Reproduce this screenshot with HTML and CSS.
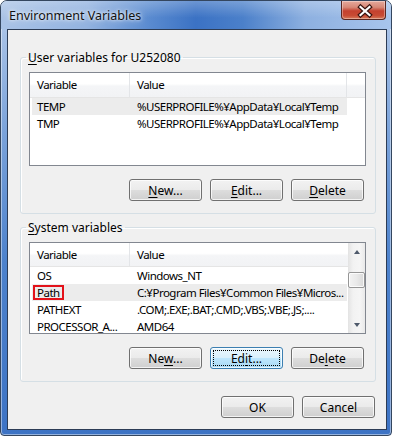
FILE: index.html
```html
<!DOCTYPE html>
<html lang="en">

<head>
    <meta charset="UTF-8">
    <title>Environment Variables</title>
    <link rel="stylesheet" href="styles.css">
</head>

<body>
    <div class="window">
        <div class="titlebar">
            <span class="title">Environment Variables</span>
            <div class="close-btn">
                <svg width="45" height="19" viewBox="0 0 45 19">
                    <path d="M19.5 6 L28.5 14 M28.5 6 L19.5 14" stroke="#3a1410" stroke-width="4.5" stroke-linecap="square" fill="none" />
                    <path d="M19.5 6 L28.5 14 M28.5 6 L19.5 14" stroke="#ffffff" stroke-width="2.2" stroke-linecap="square" fill="none" />
                </svg>
            </div>
        </div>

        <div class="client">
            <fieldset class="group">
                <legend><u>U</u>ser variables for U252080</legend>
                <div class="listview user-list">
                    <div class="lv-main">
                        <div class="lv-header">
                            <div class="hcol col-name">Variable</div>
                            <div class="hcol col-value">Value</div>
                            <div class="hcol col-rest"></div>
                        </div>
                        <div class="lv-row selected">
                            <div class="cell col-name">TEMP</div>
                            <div class="cell col-value">%USERPROFILE%¥AppData¥Local¥Temp</div>
                        </div>
                        <div class="lv-row">
                            <div class="cell col-name">TMP</div>
                            <div class="cell col-value">%USERPROFILE%¥AppData¥Local¥Temp</div>
                        </div>
                    </div>
                </div>
                <div class="btn-row">
                    <button class="btn"><u>N</u>ew...</button>
                    <button class="btn"><u>E</u>dit...</button>
                    <button class="btn"><u>D</u>elete</button>
                </div>
            </fieldset>

            <fieldset class="group system-group">
                <legend><u>S</u>ystem variables</legend>
                <div class="listview system-list">
                    <div class="lv-main">
                        <div class="lv-header">
                            <div class="hcol col-name">Variable</div>
                            <div class="hcol col-value">Value</div>
                        </div>
                        <div class="lv-row">
                            <div class="cell col-name">OS</div>
                            <div class="cell col-value">Windows_NT</div>
                        </div>
                        <div class="lv-row selected">
                            <div class="cell col-name marked-cell"><span class="marked">Path</span></div>
                            <div class="cell col-value">C:¥Program Files¥Common Files¥Micros...</div>
                        </div>
                        <div class="lv-row">
                            <div class="cell col-name">PATHEXT</div>
                            <div class="cell col-value">.COM;.EXE;.BAT;.CMD;.VBS;.VBE;.JS;....</div>
                        </div>
                        <div class="lv-row">
                            <div class="cell col-name">PROCESSOR_A...</div>
                            <div class="cell col-value">AMD64</div>
                        </div>
                    </div>
                    <div class="scrollbar">
                        <div class="sb-arrow"><span class="tri-up"></span></div>
                        <div class="sb-track"><div class="sb-thumb"></div></div>
                        <div class="sb-arrow"><span class="tri-down"></span></div>
                    </div>
                </div>
                <div class="btn-row">
                    <button class="btn">Ne<u>w</u>...</button>
                    <button class="btn focused"><span class="focus-rect">Ed<u>i</u>t...</span></button>
                    <button class="btn">De<u>l</u>ete</button>
                </div>
            </fieldset>

            <div class="dialog-buttons">
                <button class="btn">OK</button>
                <button class="btn">Cancel</button>
            </div>
        </div>
    </div>
</body>

</html>
```

FILE: styles.css
```css
body{
    margin: 0;
    background-color: #ffffff;
    font-family: "Noto Sans", "DejaVu Sans", sans-serif;
    font-size: 12px;
    color: #000000;
}

.window{
    width: 392px;
    height: 436px;
    box-sizing: border-box;
    border: 1px solid #34465f;
    border-radius: 7px 7px 4px 4px;
    padding: 0 4px 5px 6px;
    display: flex;
    flex-direction: column;
    background: linear-gradient(180deg, #bcd1ec 0%, #a5c0e6 8%, #7ba3da 30%, #4d82cc 60%, #3d73c4 100%);
    box-shadow: inset 0 0 0 1px rgba(255,255,255,0.45);
}

.titlebar{
    height: 28px;
    display: flex;
    align-items: flex-start;
    margin: 0 -4px 0 -6px;
    padding: 0 5px 0 8px;
    border-radius: 6px 6px 0 0;
    background:
        linear-gradient(180deg, rgba(255,255,255,0.25) 0%, rgba(255,255,255,0) 60%),
        linear-gradient(90deg, #aac3e6 0%, #93b3e0 22%, #5a8bd0 38%, #3b72c4 50%, #4b80ca 62%, #8db0e0 78%, #a8c5ec 100%);
}

.title{
    margin-top: 7px;
    line-height: 16px;
    font-size: 12.5px;
    color: #111111;
    text-shadow: 0 0 6px rgba(255,255,255,0.9), 0 0 3px rgba(255,255,255,0.9);
}

.close-btn{
    margin-left: auto;
    width: 45px;
    height: 19px;
    box-sizing: border-box;
    border: 1px solid #5a2620;
    border-top: none;
    border-radius: 0 0 4px 4px;
    background: linear-gradient(180deg, #e6a99c 0%, #d78877 35%, #c4412f 55%, #c74a33 80%, #d67a5b 100%);
    box-shadow: inset 0 0 0 1px rgba(255,255,255,0.35);
}

.close-btn svg{
    display: block;
    margin-left: -1px;
}

.client{
    height: 401px;
    box-sizing: border-box;
    border: 1px solid #2c3c55;
    background-color: #f0f0f0;
    padding: 20px 11px 0 12px;
}

.group{
    width: 356px;
    box-sizing: border-box;
    margin: 0;
    padding: 7px 9px 12px 8px;
    border: 1px solid #d5dfe5;
    border-radius: 3px;
    box-shadow: inset 1px 1px 0 #ffffff;
}

.system-group{
    margin-top: 6px;
}

legend{
    padding: 0 2px;
    margin-left: -3px;
    line-height: 15px;
}

u{
    text-decoration-thickness: 1px;
    text-underline-offset: 2px;
}

.listview{
    height: 94px;
    box-sizing: border-box;
    border: 1px solid #828790;
    background-color: #ffffff;
    display: flex;
    overflow: hidden;
    font-size: 11.5px;
    letter-spacing: -0.5px;
}

.system-list{
    height: 92px;
}

.lv-main{
    flex: 1;
    overflow: hidden;
}

.lv-header{
    display: flex;
    height: 25px;
    box-sizing: border-box;
    border-bottom: 1px solid #e5e5e5;
    background: linear-gradient(180deg, #ffffff 0%, #ffffff 45%, #f4f5f7 55%, #f2f3f5 100%);
}

.system-list .lv-header{
    height: 24px;
}

.hcol{
    box-sizing: border-box;
    line-height: 23px;
    border-right: 1px solid #e3e5e8;
    white-space: nowrap;
}

.col-name{
    width: 100px;
    padding-left: 7px;
    flex: none;
}

.col-value{
    width: 217px;
    padding-left: 7px;
    flex: none;
}

.col-rest{
    flex: 1;
    border-right: none;
}

.system-list .col-value{
    width: 218px;
}

.system-list .hcol.col-value{
    border-right: none;
}

.lv-row{
    display: flex;
    height: 17px;
    line-height: 17px;
    margin-left: 2px;
    width: 315px;
}

.lv-row .col-name{
    width: 98px;
    padding-left: 5px;
}

.cell{
    box-sizing: border-box;
    white-space: nowrap;
    overflow: hidden;
}

.lv-row.selected{
    background-color: #ececec;
}

.cell.marked-cell{
    overflow: visible;
    display: flex;
    align-items: center;
}

.marked{
    display: inline-block;
    height: 11px;
    line-height: 11px;
    padding: 0 2px;
    margin-left: -2px;
    outline: 2px solid #e3121a;
}

.scrollbar{
    width: 17px;
    flex: none;
    display: flex;
    flex-direction: column;
    background: linear-gradient(90deg, #e3e3e3 0%, #f2f2f2 30%, #f5f5f5 70%, #e9e9e9 100%);
}

.sb-arrow{
    height: 17px;
    display: flex;
    align-items: center;
    justify-content: center;
}

.tri-up{
    border-left: 3.5px solid transparent;
    border-right: 3.5px solid transparent;
    border-bottom: 4px solid #4f5a6b;
}

.tri-down{
    border-left: 3.5px solid transparent;
    border-right: 3.5px solid transparent;
    border-top: 4px solid #4f5a6b;
}

.sb-track{
    flex: 1;
}

.sb-thumb{
    margin: 12px 0 0 0;
    height: 16px;
    box-sizing: border-box;
    border: 1px solid #969696;
    border-radius: 2px;
    background: linear-gradient(90deg, #f3f3f3 0%, #e9e9e9 50%, #d9d9d9 100%);
    box-shadow: inset 0 0 0 1px rgba(255,255,255,0.8);
}

.btn-row{
    display: flex;
    justify-content: flex-end;
    gap: 8px;
    margin-top: 13px;
    padding-right: 2px;
}

.dialog-buttons{
    display: flex;
    justify-content: flex-end;
    gap: 8px;
    margin-top: 14px;
    padding-right: 0;
}

.btn{
    width: 73px;
    height: 22px;
    box-sizing: border-box;
    padding: 0;
    font-family: inherit;
    font-size: 12px;
    color: #000000;
    border: 1px solid #707070;
    border-radius: 3px;
    background: linear-gradient(180deg, #f2f2f2 0%, #ebebeb 48%, #dddddd 52%, #cfcfcf 100%);
    box-shadow: inset 0 0 0 1px rgba(255,255,255,0.75);
}

.btn.focused{
    border-color: #3c7fb1;
    background: linear-gradient(180deg, #eaf6fd 0%, #d9f0fc 48%, #bee6fd 52%, #a7d9f5 100%);
    padding: 2px;
}

.focus-rect{
    display: flex;
    align-items: center;
    justify-content: center;
    height: 100%;
    box-sizing: border-box;
    border: 1px dotted #000000;
}
```
